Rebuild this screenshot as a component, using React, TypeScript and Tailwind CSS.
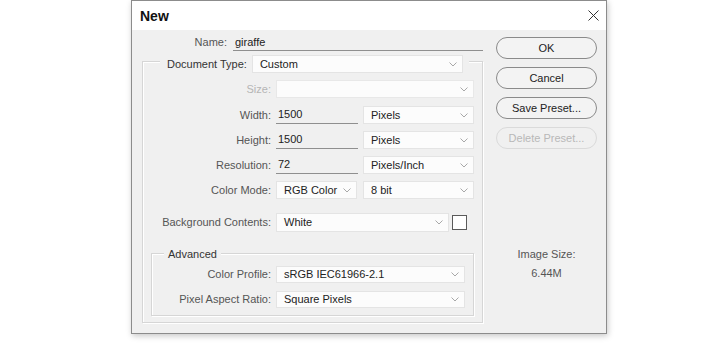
import React from "react";

const Chevron = () => (
  <svg width="8" height="5" viewBox="0 0 8 5" className="shrink-0">
    <path d="M0.5 0.5 L4 4 L7.5 0.5" stroke="#a8a8a8" strokeWidth="1" fill="none" />
  </svg>
);

function Select({ text, cls, disabled }: { text?: string; cls: string; disabled?: boolean }) {
  return (
    <div
      className={
        "flex items-center justify-between pl-[7px] pr-[5px] bg-[#fcfcfc] border border-[#e4e4e4] text-[#222] " +
        cls
      }
    >
      <span className={disabled ? "text-[#b0b0b0]" : ""}>{text ?? ""}</span>
      <Chevron />
    </div>
  );
}

function Btn({ children, disabled }: { children: React.ReactNode; disabled?: boolean }) {
  return (
    <div
      className={
        "h-[22px] w-full rounded-full border flex items-center justify-center " +
        (disabled ? "border-[#dadada] text-[#b8b8b8] bg-[#f0f0f0]" : "border-[#8a8a8a] text-[#222] bg-[#f3f3f3]")
      }
    >
      {children}
    </div>
  );
}

export default function App() {
  return (
    <div className="w-[725px] h-[344px] bg-white flex pl-[131px] font-['Liberation_Sans',Arial,sans-serif] text-[11px] leading-none">
      <div className="w-[476px] h-[334px] border border-[#8c8c8c] bg-[#f0f0f0] flex flex-col shadow-[1px_2px_6px_rgba(0,0,0,0.22)]">
        {/* Title bar */}
        <div className="h-[29px] bg-white flex items-center justify-between pl-[8px] pr-[7px] shrink-0">
          <span className="text-[14px] font-bold text-[#111]">New</span>
          <svg width="11" height="11" viewBox="0 0 11 11">
            <path d="M0.5 0.5 L10.5 10.5 M10.5 0.5 L0.5 10.5" stroke="#333" strokeWidth="1" />
          </svg>
        </div>

        {/* Body */}
        <div className="flex flex-1">
          {/* Left column */}
          <div className="ml-[10px] w-[341px] flex flex-col">
            {/* Name row */}
            <div className="flex items-end mt-[5px] h-[16px]">
              <div className="w-[91px] pr-[6px] text-right text-[#555] pb-[3px]">Name:</div>
              <div className="w-[250px] h-[16px] border-b border-[#8f8f8f] pl-[2px] flex items-center text-[#222]">
                giraffe
              </div>
            </div>

            {/* Main group */}
            <div className="mt-[10px] h-[262px] border border-[#d6d6d6] shadow-[inset_1px_1px_0_#fff,1px_1px_0_#fff] flex flex-col">
              {/* Legend */}
              <div className="-mt-[7px] ml-[17px] w-fit h-[18px] flex items-center bg-[#f0f0f0] pl-[7px] pr-[6px]">
                <span className="text-[#333]">Document Type:</span>
                <Select text="Custom" cls="ml-[5px] w-[211px] h-[18px]" />
              </div>

              {/* Size */}
              <div className="flex items-center h-[18px] mt-[7px]">
                <div className="w-[133px] pr-[5px] text-right text-[#b5b5b5]">Size:</div>
                <Select cls="w-[198px] h-[18px] bg-[#f4f4f4] border-[#e8e8e8]" disabled />
              </div>

              {/* Width */}
              <div className="flex items-center h-[18px] mt-[8px]">
                <div className="w-[133px] pr-[5px] text-right text-[#555]">Width:</div>
                <div className="w-[82px] h-[17px] border-b border-[#8f8f8f] pl-[2px] flex items-center text-[#222]">1500</div>
                <Select text="Pixels" cls="ml-[5px] w-[111px] h-[18px]" />
              </div>

              {/* Height */}
              <div className="flex items-center h-[18px] mt-[7px]">
                <div className="w-[133px] pr-[5px] text-right text-[#555]">Height:</div>
                <div className="w-[82px] h-[17px] border-b border-[#8f8f8f] pl-[2px] flex items-center text-[#222]">1500</div>
                <Select text="Pixels" cls="ml-[5px] w-[111px] h-[18px]" />
              </div>

              {/* Resolution */}
              <div className="flex items-center h-[18px] mt-[7px]">
                <div className="w-[133px] pr-[5px] text-right text-[#555]">Resolution:</div>
                <div className="w-[82px] h-[17px] border-b border-[#8f8f8f] pl-[2px] flex items-center text-[#222]">72</div>
                <Select text="Pixels/Inch" cls="ml-[5px] w-[111px] h-[18px]" />
              </div>

              {/* Color Mode */}
              <div className="flex items-center h-[18px] mt-[7px]">
                <div className="w-[133px] pr-[5px] text-right text-[#555]">Color Mode:</div>
                <Select text="RGB Color" cls="w-[81px] h-[18px]" />
                <Select text="8 bit" cls="ml-[6px] w-[111px] h-[18px]" />
              </div>

              {/* Background Contents */}
              <div className="flex items-center h-[18px] mt-[14px]">
                <div className="w-[133px] pr-[5px] text-right text-[#555]">Background Contents:</div>
                <Select text="White" cls="w-[173px] h-[19px] border-[#6a9fd6]" />
                <div className="ml-[3px] w-[15px] h-[15px] bg-white border border-[#5a5a5a]" />
              </div>

              {/* Advanced group */}
              <div className="mt-[22px] ml-[8px] w-[323px] h-[63px] border border-[#d6d6d6] shadow-[inset_1px_1px_0_#fff,1px_1px_0_#fff] flex flex-col">
                <div className="-mt-[7px] ml-[12px] w-fit h-[14px] flex items-center bg-[#f0f0f0] px-[4px] text-[#333]">
                  Advanced
                </div>
                <div className="flex items-center h-[17px] mt-[5px]">
                  <div className="w-[124px] pr-[5px] text-right text-[#555]">Color Profile:</div>
                  <Select text="sRGB IEC61966-2.1" cls="w-[189px] h-[17px]" />
                </div>
                <div className="flex items-center h-[17px] mt-[8px]">
                  <div className="w-[124px] pr-[5px] text-right text-[#555]">Pixel Aspect Ratio:</div>
                  <Select text="Square Pixels" cls="w-[189px] h-[17px]" />
                </div>
              </div>
            </div>
          </div>

          {/* Right column */}
          <div className="ml-[13px] w-[101px] flex flex-col">
            <div className="mt-[7px] flex flex-col gap-[8px]">
              <Btn>OK</Btn>
              <Btn>Cancel</Btn>
              <Btn>Save Preset...</Btn>
              <Btn disabled>Delete Preset...</Btn>
            </div>
            <div className="mt-[100px] flex flex-col items-center text-[#555]">
              <span>Image Size:</span>
              <span className="mt-[8px]">6.44M</span>
            </div>
          </div>
        </div>
      </div>
    </div>
  );
}
